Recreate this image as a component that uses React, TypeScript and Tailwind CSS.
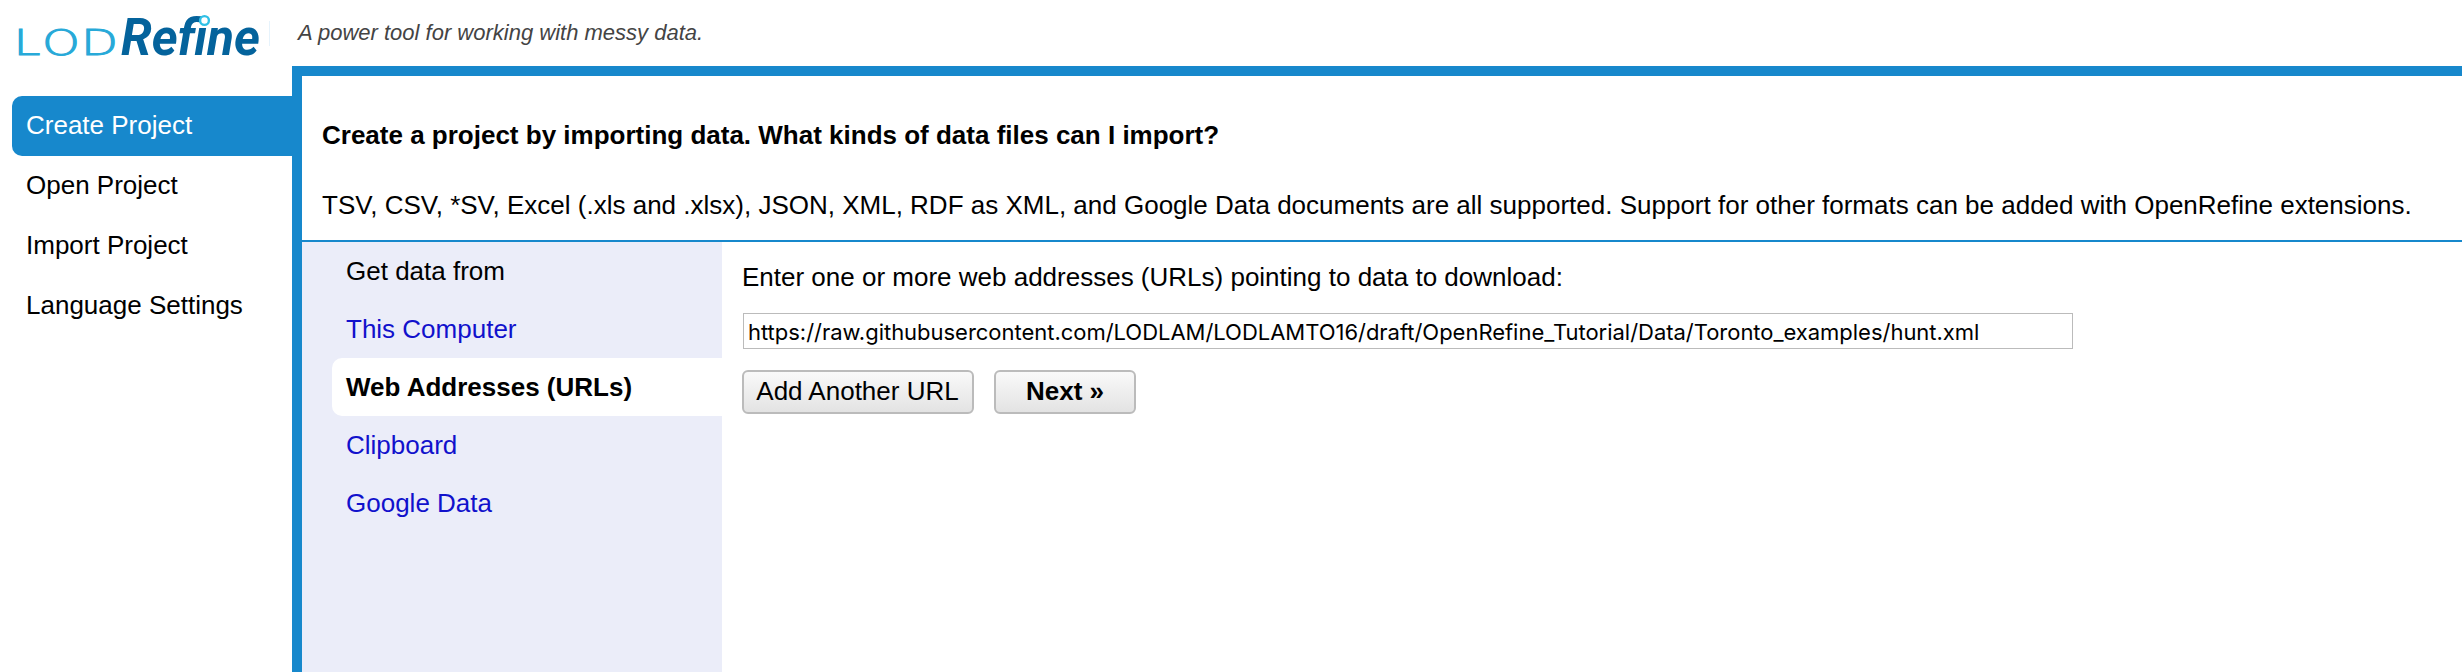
import React from "react";

const navItems = ["Create Project", "Open Project", "Import Project", "Language Settings"];
const sources = ["This Computer", "Web Addresses (URLs)", "Clipboard", "Google Data"];

function Logo() {
  return (
    <svg className="block" width="292" height="66" viewBox="0 0 292 66" role="img" aria-label="LODRefine">
      <g fill="#27a9d8" stroke="#27a9d8" strokeWidth="1" fontFamily="'DejaVu Sans Light', 'DejaVu Sans', sans-serif" fontWeight="200" fontSize="35">
        <text x="13.5" y="54.5" textLength="27" lengthAdjust="spacingAndGlyphs">L</text>
        <text x="42" y="54.5" textLength="38" lengthAdjust="spacingAndGlyphs">O</text>
        <text x="81" y="54.5" textLength="37" lengthAdjust="spacingAndGlyphs">D</text>
      </g>
      <text x="121" y="55" fill="#04639c" fontFamily="Roboto, sans-serif" fontSize="52" fontWeight="700" fontStyle="italic" textLength="139" lengthAdjust="spacingAndGlyphs">Refine</text>
      <circle cx="204.5" cy="20.5" r="4.4" fill="#fff" stroke="#2fc0e6" strokeWidth="2.4" />
      <path d="M269.5 21V46" stroke="#e6f3fc" />
    </svg>
  );
}

export default function App() {
  return (
    <div className="flex h-[672px] w-[2462px] flex-col overflow-hidden bg-white font-['Liberation_Sans',Arial,sans-serif] text-[26px] leading-[30px] text-black">
      <header className="flex h-[66px] shrink-0">
        <Logo />
        <p className="pt-5 pl-[6px] text-[22px] leading-[26px] text-[#444] italic">A power tool for working with messy data.</p>
      </header>
      <div className="flex min-h-0 flex-1">
        <nav className="w-[292px] shrink-0 pt-[30px] pl-3">
          {navItems.map((item, i) => (
            <a key={item} className={i === 0 ? "flex h-[60px] items-center rounded-l-[10px] bg-[#1788cc] pb-[2px] pl-[14px] text-white" : "flex h-[60px] items-center pb-[2px] pl-[14px]"}>
              {item}
            </a>
          ))}
        </nav>
        <main className="flex min-w-0 flex-1 flex-col border-t-10 border-l-10 border-[#1788cc]">
          <section className="h-[166px] shrink-0 border-b-2 border-[#1788cc] pt-[44px] pl-5">
            <h1 className="font-bold">Create a project by importing data. What kinds of data files can I import?</h1>
            <p className="mt-10 whitespace-nowrap">
              TSV, CSV, *SV, Excel (.xls and .xlsx), JSON, XML, RDF as XML, and Google Data documents are all supported. Support for other formats can be added with OpenRefine extensions.
            </p>
          </section>
          <div className="flex min-h-0 flex-1">
            <aside className="w-[420px] shrink-0 bg-[#ebedf9] pl-[30px]">
              <div className="flex h-[58px] items-center pl-[14px]">Get data from</div>
              {sources.map((s, i) => (
                <a key={s} className={i === 1 ? "flex h-[58px] items-center rounded-l-[10px] bg-white pl-[14px] font-bold" : "flex h-[58px] items-center pl-[14px] text-[#1111cc]"}>
                  {s}
                </a>
              ))}
            </aside>
            <section className="pt-[20px] pl-5">
              <p>Enter one or more web addresses (URLs) pointing to data to download:</p>
              <div className="mt-[21px] ml-px flex h-[36px] w-[1330px] items-center border border-[#bbb] pt-[2px] pl-1 font-['Inter',sans-serif] text-[22px] tracking-[-0.026px]">
                https://raw.githubusercontent.com/LODLAM/LODLAMTO16/draft/OpenRefine_Tutorial/Data/Toronto_examples/hunt.xml
              </div>
              <div className="mt-[21px] flex gap-5">
                <button className="h-[44px] w-[232px] rounded-[6px] border-2 border-[#bbb] bg-linear-to-b from-[#f9f9f9] to-[#e3e3e3] pr-[1px] pb-[2px]">Add Another URL</button>
                <button className="h-[44px] w-[142px] rounded-[6px] border-2 border-[#bbb] bg-linear-to-b from-[#f9f9f9] to-[#e3e3e3] pb-[2px] font-bold">Next »</button>
              </div>
            </section>
          </div>
        </main>
      </div>
    </div>
  );
}
